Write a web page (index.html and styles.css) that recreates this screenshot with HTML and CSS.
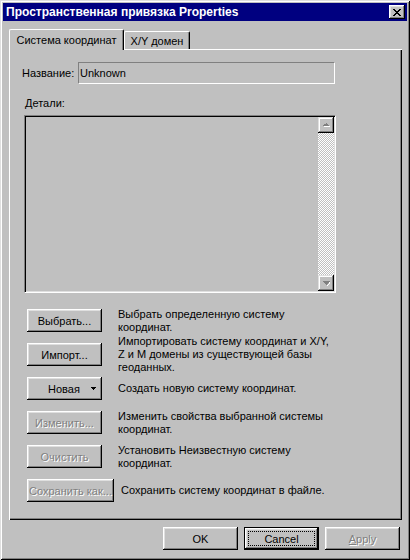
FILE: index.html
```html
<!DOCTYPE html>
<html lang="ru">
<head>
  <meta charset="UTF-8" />
  <title>Пространственная привязка Properties</title>
  <link rel="stylesheet" href="styles.css">
</head>
<body>
  <div class="window">
    <div class="titlebar">
      <span class="title">Пространственная привязка Properties</span>
      <span class="close-btn">
        <svg width="8" height="7" viewBox="0 0 8 7" shape-rendering="crispEdges"><path fill="#000" d="M0 0h2v1h-2z M6 0h2v1h-2z M1 1h2v1h-2z M5 1h2v1h-2z M2 2h4v1h-4z M3 3h2v1h-2z M2 4h4v1h-4z M1 5h2v1h-2z M5 5h2v1h-2z M0 6h2v1h-2z M6 6h2v1h-2z"/></svg>
      </span>
    </div>

    <div class="tabs">
      <div class="tab active">Система координат</div>
      <div class="tab">X/Y домен</div>
    </div>

    <div class="panel">
      <div class="name-row">
        <span class="name-label">Название:</span>
        <div class="field">Unknown</div>
      </div>

      <div class="details-label">Детали:</div>
      <div class="listbox">
        <div class="list-area"></div>
        <div class="scrollbar">
          <div class="scroll-btn">
            <svg width="7" height="5" viewBox="0 0 7 5" shape-rendering="crispEdges"><path fill="#fff" d="M4 1h1v1h1v1h1v1h-6v-1h1z"/><path fill="#808080" d="M3 0h1v1h1v1h1v1h-6v-1h1v-1h1z"/></svg>
          </div>
          <div class="scroll-track"></div>
          <div class="scroll-btn">
            <svg width="7" height="5" viewBox="0 0 7 5" shape-rendering="crispEdges"><path fill="#fff" d="M1 1h7v1h-1v1h-1v1h-1v1h-1v-1h1v-1h1v-1h1z"/><path fill="#808080" d="M0 0h7v1h-1v1h-1v1h-1v1h-1v-1h-1v-1h-1v-1h-1z"/></svg>
          </div>
        </div>
      </div>

      <div class="actions">
        <div class="action-row">
          <button class="btn">Выбрать...</button>
          <div class="desc">Выбрать определенную систему<br>координат.</div>
        </div>
        <div class="action-row">
          <button class="btn">Импорт...</button>
          <div class="desc">Импортировать систему координат и X/Y,<br>Z и M домены из существующей базы<br>геоданных.</div>
        </div>
        <div class="action-row">
          <button class="btn btn-menu"><span>Новая</span>
            <svg width="5" height="3" viewBox="0 0 5 3" shape-rendering="crispEdges"><path fill="#000" d="M0 0h5v1h-1v1h-1v1h-1v-1h-1v-1h-1z"/></svg>
          </button>
          <div class="desc">Создать новую систему координат.</div>
        </div>
        <div class="action-row">
          <button class="btn" disabled>Изменить...</button>
          <div class="desc">Изменить свойства выбранной системы<br>координат.</div>
        </div>
        <div class="action-row">
          <button class="btn" disabled>Очистить</button>
          <div class="desc">Установить Неизвестную систему<br>координат.</div>
        </div>
        <div class="action-row save-row">
          <button class="btn btn-wide" disabled>Сохранить как...</button>
          <div class="desc">Сохранить систему координат в файле.</div>
        </div>
      </div>
    </div>

    <div class="footer">
      <button class="btn">OK</button>
      <button class="btn btn-default"><span class="focus">Cancel</span></button>
      <button class="btn" disabled><u>A</u>pply</button>
    </div>
  </div>
</body>
</html>
```

FILE: styles.css
```css
body { margin: 0; background: #c0c0c0; font-family: "Liberation Sans", Arial, sans-serif; font-size: 11px; color: #000; }

.window { width: 410px; height: 560px; box-sizing: border-box; padding: 3px; background: #c0c0c0;
  box-shadow: inset 1px 1px #dfdfdf, inset -1px -1px #000, inset 2px 2px #fff, inset -2px -2px #808080; }

.titlebar { height: 18px; background: #000080; display: flex; align-items: center; justify-content: space-between; padding: 0 2px 0 3px; }
.title { color: #fff; font-weight: bold; font-size: 12px; }
.close-btn { width: 16px; height: 14px; box-sizing: border-box; background: #c0c0c0; display: flex; align-items: center; justify-content: center;
  box-shadow: inset -1px -1px #000, inset 1px 1px #fff, inset -2px -2px #808080, inset 2px 2px #dfdfdf; }

.tabs { display: flex; align-items: flex-end; margin-top: 8px; padding-left: 6px; height: 20px; }
.tab { height: 18px; width: 66px; box-sizing: border-box; padding-top: 3px; text-align: center; line-height: 13px; background: #c0c0c0;
  border: 1px solid; border-color: #fff #000 transparent #fff; border-bottom: none; border-radius: 2px 2px 0 0;
  box-shadow: inset -1px 0 #808080; }
.tab.active { width: 115px; height: 21px; margin-bottom: -1px; position: relative; z-index: 1; padding-top: 4px; }

.panel { margin: 0 5px 0 6px; height: 471px; box-sizing: border-box; padding: 13px 0 0 13px;
  box-shadow: inset 1px 1px #fff, inset -1px -1px #000, inset -2px -2px #808080; }

.name-row { display: flex; align-items: center; height: 22px; }
.name-label { width: 56px; }
.field { width: 257px; height: 22px; box-sizing: border-box; border: 1px solid; border-color: #808080 #fff #fff #808080; padding-left: 1px; line-height: 20px; }

.details-label { margin-top: 13px; padding-left: 3px; line-height: 13px; }

.listbox { margin: 5px 0 0 2px; width: 312px; height: 178px; box-sizing: border-box; display: flex; padding: 1px;
  border: 1px solid; border-color: #808080 #fff #fff #808080; box-shadow: inset 1px 1px #000, inset -1px -1px #dfdfdf; }
.list-area { flex: 1; }
.scrollbar { width: 16px; display: flex; flex-direction: column; }
.scroll-track { flex: 1; background: repeating-conic-gradient(#fff 0 25%, #c0c0c0 0 50%) 0 0 / 2px 2px; }
.scroll-btn { height: 16px; background: #c0c0c0; display: flex; align-items: center; justify-content: center;
  box-shadow: inset -1px -1px #000, inset 1px 1px #dfdfdf, inset -2px -2px #808080, inset 2px 2px #fff; }

.actions { margin: 16px 0 0 5px; display: flex; flex-direction: column; gap: 11px; }
.action-row { display: flex; align-items: center; height: 23px; }
.desc { margin-left: 16px; line-height: 13px; white-space: nowrap; }
.save-row .desc { margin-left: 7px; }

.btn { width: 75px; height: 23px; box-sizing: border-box; padding: 0; border: none; background: #c0c0c0; font: inherit; color: #000;
  box-shadow: inset -1px -1px #000, inset 1px 1px #fff, inset -2px -2px #808080, inset 2px 2px #dfdfdf; }
.btn:disabled { color: #808080; text-shadow: 1px 1px #fff; }
.btn-wide { width: 87px; }
.btn-menu { display: flex; align-items: center; padding: 0 6px 0 21px; }
.btn-menu svg { margin-left: auto; }

.footer { display: flex; justify-content: flex-end; gap: 6px; margin-top: 7px; padding-right: 7px; }
.btn-default { display: flex; padding: 4px; box-shadow: inset 0 0 0 1px #000, inset -2px -2px #000, inset 2px 2px #fff, inset -3px -3px #808080, inset 3px 3px #dfdfdf; }
.focus { flex: 1; border: 1px dotted #000; display: flex; align-items: center; justify-content: center; }
```
